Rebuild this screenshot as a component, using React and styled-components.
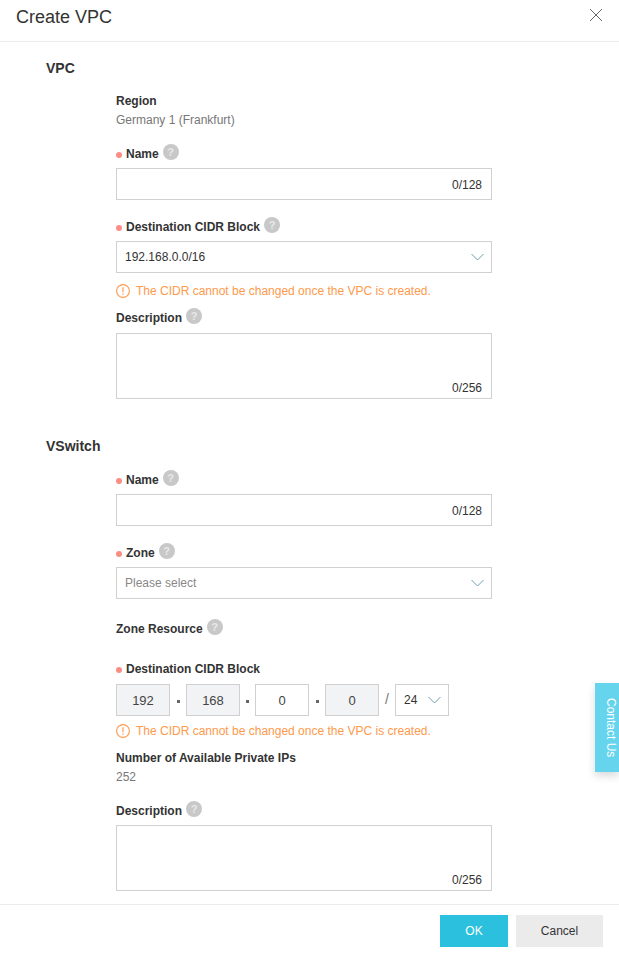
import React from 'react';
import styled, { createGlobalStyle } from 'styled-components';

const GlobalStyle = createGlobalStyle`
  html, body {
    margin: 0;
    padding: 0;
    height: 100%;
    background: #fff;
    overflow: hidden;
  }
  body {
    font-family: "Liberation Sans", Arial, sans-serif;
    font-size: 12px;
    color: #333;
  }
  * {
    box-sizing: border-box;
  }
`;

const Dialog = styled.div`
  position: relative;
  display: flex;
  flex-direction: column;
  height: 954px;
  width: 619px;
  overflow: hidden;
`;

const Header = styled.header`
  display: flex;
  align-items: center;
  justify-content: space-between;
  height: 42px;
  padding: 0 16px 8px;
  border-bottom: 1px solid #ebebeb;
`;

const Title = styled.h1`
  margin: 0;
  font-size: 18px;
  font-weight: 400;
  line-height: 26px;
  color: #333;
`;

const CloseButton = styled.button`
  display: flex;
  padding: 0;
  border: 0;
  background: none;
  cursor: pointer;
  margin-bottom: 4px;
`;

const Body = styled.main`
  flex: 1;
  padding-top: 16px;
  overflow: hidden;
`;

const SectionTitle = styled.h2`
  margin: ${(p) => p.$top || 0}px 0 13px 46px;
  font-size: 14px;
  font-weight: 700;
  line-height: 20px;
  color: #333;
`;

const Fields = styled.div`
  display: flex;
  flex-direction: column;
  width: 376px;
  margin-left: 116px;
`;

const Label = styled.div`
  display: flex;
  align-items: center;
  height: 20px;
  margin-top: ${(p) => p.$top || 0}px;
  margin-bottom: ${(p) => p.$bottom ?? 5}px;
  font-size: 12px;
  font-weight: 700;
  color: #333;

  &:has(> span) {
    padding-top: 2px;
  }

  ${(p) =>
    p.$required &&
    `
    &::before {
      content: "";
      width: 6px;
      height: 6px;
      margin: 2px 4px 0 0;
      border-radius: 50%;
      background: #fb8d84;
    }
  `}
`;

const Help = styled.span`
  display: inline-flex;
  align-items: center;
  justify-content: center;
  width: 16px;
  height: 16px;
  margin: -4px 0 0 4px;
  border-radius: 50%;
  background: #c8c8c8;
  color: #e8e8e8;
  font-size: 11px;
  font-weight: 700;
`;

const Value = styled.div`
  height: 20px;
  line-height: 20px;
  color: #777;
`;

const InputWrap = styled.div`
  position: relative;
  height: ${(p) => p.$height || 32}px;
`;

const TextInput = styled.input`
  display: block;
  width: 100%;
  height: 100%;
  padding: 0 60px 0 8px;
  border: 1px solid #d0d0d0;
  border-radius: 0;
  outline: none;
  font: inherit;
  background: #fff;
`;

const TextArea = styled.textarea`
  display: block;
  width: 100%;
  height: 100%;
  padding: 8px;
  border: 1px solid #d0d0d0;
  border-radius: 0;
  outline: none;
  resize: none;
  font: inherit;
  background: #fff;
`;

const Count = styled.span`
  position: absolute;
  right: 10px;
  bottom: ${(p) => p.$bottom}px;
  line-height: 14px;
  color: #333;
`;

const SelectBox = styled.div`
  display: flex;
  align-items: center;
  justify-content: space-between;
  width: ${(p) => p.$width || '100%'};
  height: 32px;
  padding: 0 6px 0 8px;
  border: 1px solid #d0d0d0;
  color: ${(p) => (p.$placeholder ? '#888' : '#333')};
`;

const Warning = styled.div`
  display: flex;
  align-items: center;
  gap: 6px;
  height: 20px;
  margin-top: ${(p) => p.$top}px;
  margin-bottom: ${(p) => p.$bottom}px;
  color: #fd9a4d;
`;

const CidrRow = styled.div`
  display: flex;
  align-items: center;
`;

const Octet = styled.div`
  display: flex;
  align-items: center;
  justify-content: center;
  width: 54px;
  height: 32px;
  border: 1px solid #d0d0d0;
  background: ${(p) => (p.$disabled ? '#f2f3f4' : '#fff')};
  font-size: 13px;
  color: #444;
`;

const Dot = styled.span`
  width: ${(p) => p.$width}px;
  display: flex;
  justify-content: center;

  &::before {
    content: "";
    width: 3px;
    height: 3px;
    margin-top: 3px;
    background: #666;
  }
`;

const Slash = styled.span`
  width: 16px;
  text-align: center;
  font-size: 14px;
  color: #777;
  margin-top: -3px;
`;

const Footer = styled.footer`
  display: flex;
  justify-content: flex-end;
  gap: 8px;
  height: 50px;
  padding: 10px 16px 0 0;
  border-top: 1px solid #ebebeb;
`;

const Button = styled.button`
  width: ${(p) => p.$width}px;
  height: 32px;
  padding: 0;
  border: 0;
  border-radius: 0;
  background: ${(p) => (p.$primary ? '#2bc0dd' : '#ebebeb')};
  color: ${(p) => (p.$primary ? '#fff' : '#333')};
  font: inherit;
  cursor: pointer;
`;

const ContactTab = styled.div`
  position: absolute;
  top: 683px;
  right: 0;
  display: flex;
  align-items: center;
  justify-content: center;
  width: 24px;
  height: 89px;
  padding-left: 7px;
  background: #66d4ec;
  box-shadow: 0 4px 8px rgba(0, 0, 0, 0.15);
  color: #fff;
  writing-mode: vertical-rl;
  font-size: 12px;
`;

function Chevron() {
  return (
    <svg width="14" height="8" viewBox="0 0 14 8" fill="none">
      <path d="M0.5 1l6 6 6-6" stroke="#6f9fb0" strokeWidth="1" />
    </svg>
  );
}

function WarningIcon() {
  return (
    <svg width="14" height="14" viewBox="0 0 14 14" fill="none">
      <circle cx="7" cy="7" r="6.4" stroke="#fd9a4d" strokeWidth="1.1" />
      <path d="M7 3.2v5M7 9.4v1.4" stroke="#fd9a4d" strokeWidth="1.2" />
    </svg>
  );
}

const CIDR_NOTE = 'The CIDR cannot be changed once the VPC is created.';

export default function App() {
  return (
    <Dialog>
      <GlobalStyle />
      <Header>
        <Title>Create VPC</Title>
        <CloseButton aria-label="Close">
          <svg width="14" height="14" viewBox="0 0 14 14" fill="none">
            <path d="M1 1l12 12M13 1L1 13" stroke="#666" strokeWidth="1" />
          </svg>
        </CloseButton>
      </Header>

      <Body>
        <SectionTitle>VPC</SectionTitle>
        <Fields>
          <Label $bottom={-1}>Region</Label>
          <Value>Germany 1 (Frankfurt)</Value>
          <Label $required $top={13}>
            Name<Help>?</Help>
          </Label>
          <InputWrap>
            <TextInput />
            <Count $bottom={8}>0/128</Count>
          </InputWrap>
          <Label $required $top={16}>
            Destination CIDR Block<Help>?</Help>
          </Label>
          <SelectBox>
            192.168.0.0/16
            <Chevron />
          </SelectBox>
          <Warning $top={8} $bottom={6}>
            <WarningIcon />
            {CIDR_NOTE}
          </Warning>
          <Label $bottom={6}>
            Description<Help>?</Help>
          </Label>
          <InputWrap $height={66}>
            <TextArea />
            <Count $bottom={4}>0/256</Count>
          </InputWrap>
        </Fields>

        <SectionTitle $top={37}>VSwitch</SectionTitle>
        <Fields>
          <Label $required>
            Name<Help>?</Help>
          </Label>
          <InputWrap>
            <TextInput />
            <Count $bottom={8}>0/128</Count>
          </InputWrap>
          <Label $required $top={16}>
            Zone<Help>?</Help>
          </Label>
          <SelectBox $placeholder>
            Please select
            <Chevron />
          </SelectBox>
          <Label $top={19} $bottom={0}>
            Zone Resource<Help>?</Help>
          </Label>
          <Label $required $top={21}>
            Destination CIDR Block
          </Label>
          <CidrRow>
            <Octet $disabled>192</Octet>
            <Dot $width={16} />
            <Octet $disabled>168</Octet>
            <Dot $width={15} />
            <Octet>0</Octet>
            <Dot $width={16} />
            <Octet $disabled>0</Octet>
            <Slash>/</Slash>
            <SelectBox $width="54px">
              24
              <Chevron />
            </SelectBox>
          </CidrRow>
          <Warning $top={5} $bottom={7}>
            <WarningIcon />
            {CIDR_NOTE}
          </Warning>
          <Label $bottom={-1}>Number of Available Private IPs</Label>
          <Value>252</Value>
          <Label $top={13}>
            Description<Help>?</Help>
          </Label>
          <InputWrap $height={66}>
            <TextArea />
            <Count $bottom={4}>0/256</Count>
          </InputWrap>
        </Fields>
      </Body>

      <Footer>
        <Button $primary $width={68}>OK</Button>
        <Button $width={87}>Cancel</Button>
      </Footer>

      <ContactTab>Contact Us</ContactTab>
    </Dialog>
  );
}
